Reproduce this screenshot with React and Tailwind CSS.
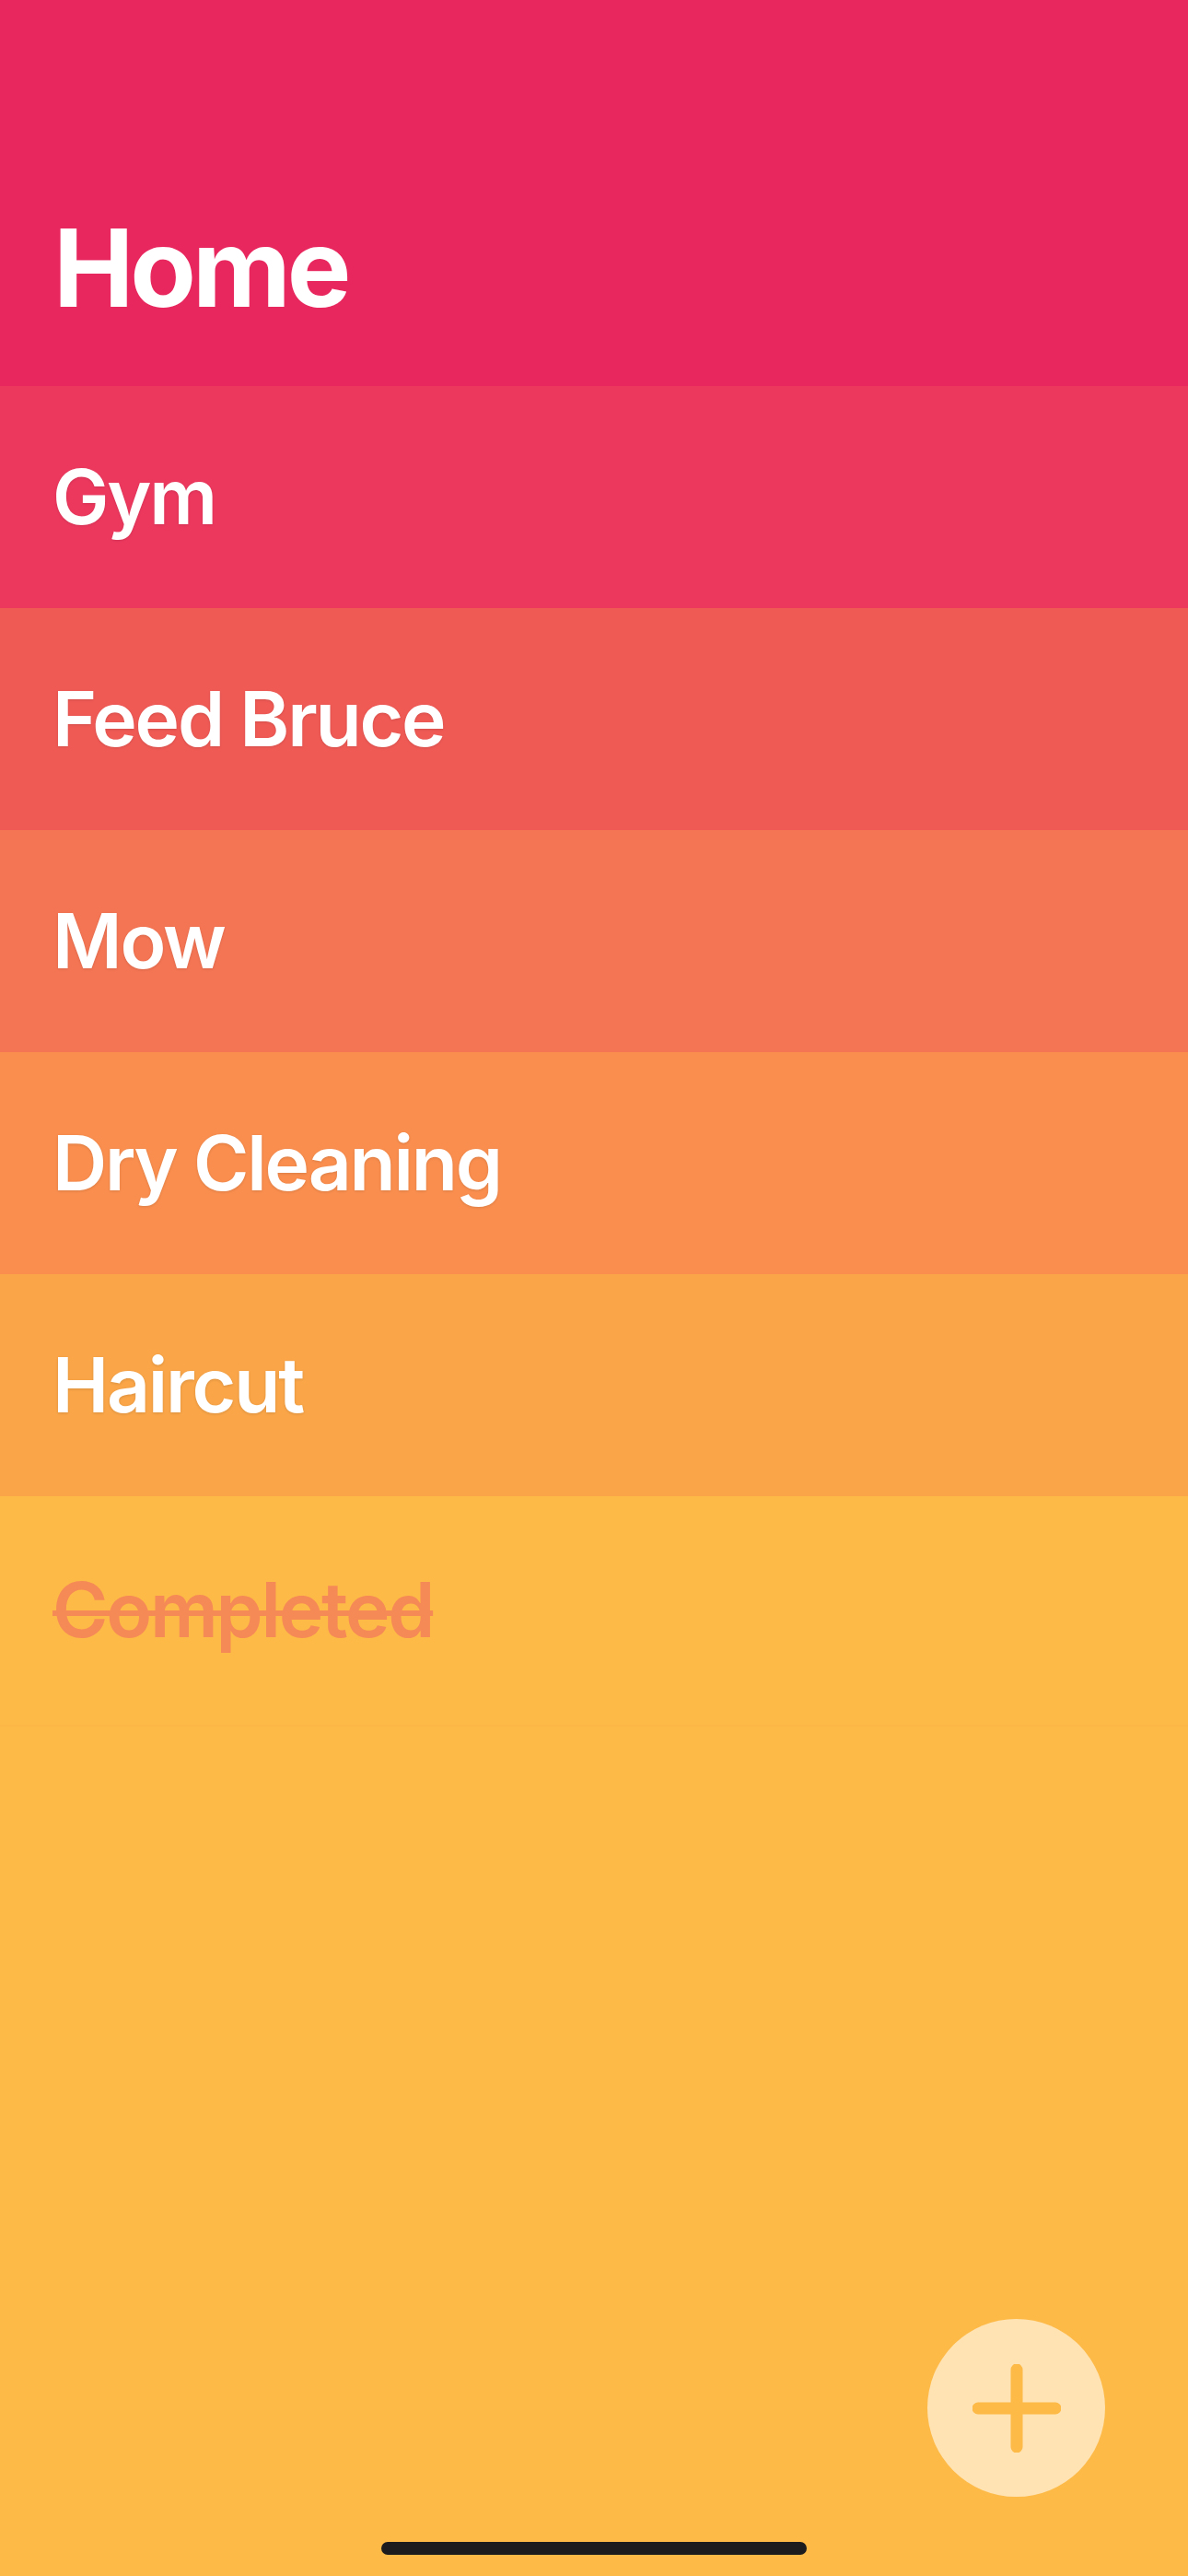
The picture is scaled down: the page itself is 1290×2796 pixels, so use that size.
const items = [
  { label: "Gym", bg: "bg-[#ED385E]" },
  { label: "Feed Bruce", bg: "bg-[#F05A55]" },
  { label: "Mow", bg: "bg-[#F47554]" },
  { label: "Dry Cleaning", bg: "bg-[#F98E4E]" },
  { label: "Haircut", bg: "bg-[#F9A548]" },
];

export default function App() {
  return (
    <div className="relative h-[2796px] overflow-hidden bg-[#FEBA47] font-['Inter','Noto_Sans',sans-serif] flex flex-col">
      {/* Header */}
      <header className="h-[419px] shrink-0 bg-[#E9275F] flex items-end px-[58px] pb-[70px]">
        <h1 className="text-[117px] leading-none font-bold tracking-[-0.035em] text-white">Home</h1>
      </header>

      {/* Tasks */}
      {items.map((item) => (
        <div key={item.label} className={`h-[241px] shrink-0 flex items-center px-[57px] ${item.bg}`}>
          <span className="text-[82px] leading-none font-semibold tracking-[-0.027em] text-white [text-shadow:0_1px_3px_rgba(0,0,0,0.12)]">
            {item.label}
          </span>
        </div>
      ))}

      {/* Completed */}
      <div className="h-[250px] shrink-0 flex items-center px-[57px] border-b-2 border-[#F9B446]/60">
        <span className="text-[82px] leading-none font-semibold tracking-[-0.027em] text-[#F58A56] line-through decoration-[6px]">
          Completed
        </span>
      </div>

      {/* Add button */}
      <button className="absolute left-[1007px] top-[2517px] w-[193px] h-[193px] rounded-full bg-[#FFE3B3] flex items-center justify-center">
        <svg width="96" height="96" viewBox="0 0 96 96" fill="none" stroke="#FEBA47" strokeWidth="13" strokeLinecap="round">
          <path d="M48 6v84M6 48h84" />
        </svg>
      </button>

      {/* Home indicator */}
      <div className="absolute left-[414px] top-[2759px] w-[462px] h-[14px] rounded-full bg-[#1C1C1E]" />
    </div>
  );
}
